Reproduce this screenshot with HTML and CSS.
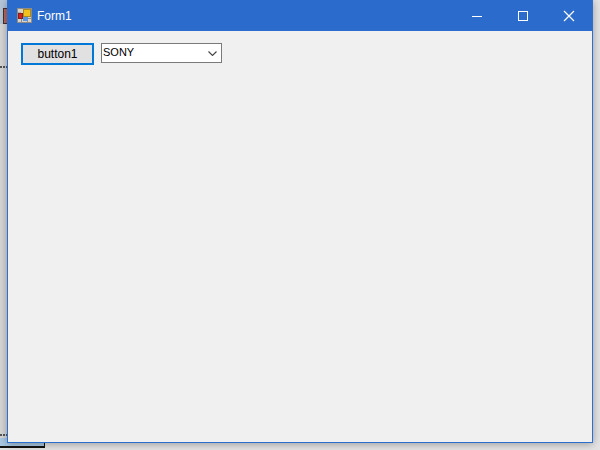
FILE: index.html
```html
<!DOCTYPE html>
<html lang="en">
<head>
<meta charset="utf-8">
<title>Form1</title>
<link rel="stylesheet" href="styles.css">
</head>
<body>
<div class="desktop">
  <div class="behind-top"></div>
  <div class="behind-thumb"></div>
  <div class="behind-strip"></div>
  <div class="behind-dots"></div>
  <div class="behind-dots lower"></div>
  <div class="behind-tab"></div>
  <div class="window">
    <header class="titlebar">
      <svg class="app-icon" width="15" height="15" viewBox="0 0 15 15">
        <rect x="0.5" y="0.5" width="14" height="14" fill="#d8d4cc" stroke="#8f8c86"/>
        <path d="M0 5h4M0 10.5h15M10.5 10v5M4.5 10v5" stroke="#8f8c86" fill="none"/>
        <rect x="6.5" y="1.5" width="7" height="7" fill="#f2c21c" stroke="#a88a24"/>
        <rect x="1.5" y="5.5" width="4" height="5" fill="#d0241c" stroke="#8e1e1a"/>
        <rect x="6" y="9" width="5" height="4" fill="#5b96e0"/>
      </svg>
      <span class="title">Form1</span>
      <div class="controls">
        <svg class="control" width="46" height="30" viewBox="0 0 46 30"><path d="M18 15.5h10" stroke="#fff" fill="none"/></svg>
        <svg class="control" width="46" height="30" viewBox="0 0 46 30"><rect x="18.5" y="10.5" width="9" height="9" stroke="#fff" fill="none"/></svg>
        <svg class="control" width="46" height="30" viewBox="0 0 46 30"><path d="M18 10l10 10M28 10l-10 10" stroke="#fff" stroke-width="1.2" fill="none"/></svg>
      </div>
    </header>
    <main class="client">
      <button class="btn" type="button">button1</button>
      <div class="combo">
        <span class="combo-text">SONY</span>
        <svg class="chevron" width="9" height="5" viewBox="0 0 9 5"><path d="M0.5 0.5l4 4l4-4" stroke="#444" stroke-width="1.1" fill="none"/></svg>
      </div>
    </main>
  </div>
</div>
</body>
</html>
```
FILE: styles.css
```css
html, body {
  margin: 0;
  padding: 0;
}
.desktop {
  position: relative;
  width: 600px;
  height: 450px;
  overflow: hidden;
  background: #e4e4e4;
  font-family: "Liberation Sans", Arial, sans-serif;
}
.behind-top {
  position: absolute;
  left: 0;
  top: 0;
  width: 7px;
  height: 24px;
  background: #b4c6d8;
}
.behind-thumb {
  position: absolute;
  left: 3px;
  top: 8px;
  width: 4px;
  height: 16px;
  background: #b5685c;
  border: 1px solid #4a3030;
  border-right: 0;
  box-sizing: border-box;
}
.behind-strip {
  position: absolute;
  left: 0;
  top: 24px;
  width: 7px;
  height: 414px;
  background: #d6d6d6;
}
.behind-dots {
  position: absolute;
  left: 0;
  top: 66px;
  width: 7px;
  height: 2px;
  background: repeating-linear-gradient(90deg, #555 0 2px, transparent 2px 3px);
}
.behind-dots.lower {
  top: 434px;
}
.behind-tab {
  position: absolute;
  left: 0;
  top: 438px;
  width: 45px;
  height: 10px;
  box-sizing: border-box;
  background: #a9c8e4;
  border-right: 1px solid #111;
  border-bottom: 2px solid #111;
}
.window {
  position: absolute;
  left: 7px;
  top: 0;
  width: 586px;
  height: 443px;
  box-sizing: border-box;
  border: 1px solid #2b6fd0;
  border-top: 0;
  background: #f0f0f0;
  box-shadow: 0 1px 8px rgba(0, 0, 0, 0.34);
  display: flex;
  flex-direction: column;
}
.titlebar {
  height: 31px;
  flex: none;
  background: #2b6bcb;
  color: #fff;
  display: flex;
  align-items: center;
  padding-left: 9px;
}
.app-icon {
  flex: none;
}
.title {
  margin-left: 5px;
  font-size: 12px;
}
.controls {
  margin-left: auto;
  display: flex;
}
.control {
  display: block;
}
.client {
  flex: 1;
  display: flex;
  align-items: flex-start;
  gap: 7px;
  padding: 12px 0 0 13px;
}
.btn {
  width: 73px;
  height: 22px;
  padding: 0 0 1px;
  box-sizing: border-box;
  border: 2px solid #0078d7;
  background: #e1e1e1;
  color: #000;
  font-family: "Liberation Sans", Arial, sans-serif;
  font-size: 12px;
}
.combo {
  width: 121px;
  height: 20px;
  box-sizing: border-box;
  border: 1px solid #7a7a7a;
  background: #fff;
  display: flex;
  align-items: center;
  padding: 0 4px 0 1px;
}
.combo-text {
  font-size: 11px;
  color: #000;
  margin-top: -3px;
}
.chevron {
  margin-left: auto;
  margin-top: 1px;
}
```
